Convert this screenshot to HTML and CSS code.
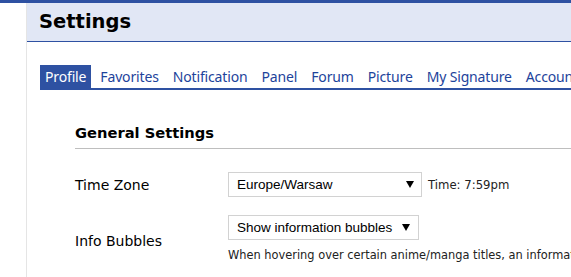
FILE: index.html
```html
<!DOCTYPE html>
<html lang="en">
<head>
  <meta charset="UTF-8">
  <title>Settings</title>
  <link rel="stylesheet" href="styles.css">
</head>
<body>
  <div class="page">
    <div class="page-header">
      <h1>Settings</h1>
    </div>

    <div class="content">
      <!-- tabs -->
      <div class="tabs">
        <a class="tab active">Profile</a>
        <a class="tab">Favorites</a>
        <a class="tab">Notification</a>
        <a class="tab">Panel</a>
        <a class="tab">Forum</a>
        <a class="tab">Picture</a>
        <a class="tab">My Signature</a>
        <a class="tab">Account</a>
      </div>

      <div class="section">
        <h2>General Settings</h2>

        <div class="rows">
          <div class="label">Time Zone</div>
          <div class="value inline">
            <div class="select tz">
              <span>Europe/Warsaw</span>
              <svg width="8" height="7" viewBox="0 0 8 7"><polygon points="0,0 8,0 4,7" fill="#000"/></svg>
            </div>
            <span class="note">Time: 7:59pm</span>
          </div>

          <div class="label bubbles">Info Bubbles</div>
          <div class="value">
            <div class="select bub">
              <span>Show information bubbles</span>
              <svg width="8" height="7" viewBox="0 0 8 7"><polygon points="0,0 8,0 4,7" fill="#000"/></svg>
            </div>
            <p class="desc">When hovering over certain anime/manga titles, an information bubble will appear.</p>
          </div>
        </div>
      </div>
    </div>
  </div>
</body>
</html>
```

FILE: styles.css
```css
html, body {
  overflow: hidden;
}

body {
  margin: 0;
  background-color: #fff;
  border-top: 3px solid #2e51a2;
  font-family: "DejaVu Sans", Verdana, sans-serif;
  color: #000;
}

.page {
  margin-left: 26px;
  width: 900px;
  min-height: 300px;
  border-left: 1px solid #e5e5e5;
}

.page-header {
  background-color: #e1e7f5;
  height: 38px;
  border-bottom: 1px solid #2e51a2;
  padding-left: 12px;
  display: flex;
  align-items: center;
}

h1 {
  margin: 0;
  font-size: 19.5px;
  font-weight: bold;
  line-height: 24px;
  color: #000;
}

.content {
  padding-left: 13px;
}

.tabs {
  margin-top: 23px;
  display: flex;
  gap: 4px;
  border-bottom: 2px solid #2e51a2;
  white-space: nowrap;
}

.tab {
  font-family: "Noto Sans", "Liberation Sans", sans-serif;
  font-size: 14px;
  letter-spacing: -0.15px;
  height: 23px;
  line-height: 23px;
  padding: 0 5px;
  color: #1d439b;
  text-decoration: none;
}

.tab.active {
  background-color: #2e51a2;
  color: #fff;
}

.section {
  padding-left: 35px;
}

h2 {
  margin: 34px 0 0;
  padding-bottom: 7px;
  font-size: 14.7px;
  line-height: 17px;
  font-weight: bold;
  border-bottom: 1px solid #bebebe;
}

.rows {
  margin-top: 23px;
  display: grid;
  grid-template-columns: 153px auto;
  row-gap: 18px;
}

.label {
  font-size: 14px;
  align-self: center;
}

.label.bubbles {
  padding-top: 3px;
}

.value.inline {
  display: flex;
  align-items: center;
  gap: 6px;
}

.select {
  box-sizing: border-box;
  height: 25px;
  border: 1px solid #d2d2d2;
  background-color: #fff;
  display: flex;
  align-items: center;
  justify-content: space-between;
  padding: 0 7px 0 8px;
  font-family: "Liberation Sans", Arial, sans-serif;
  font-size: 13.5px;
  white-space: nowrap;
}

.select.tz {
  width: 194px;
}

.select.bub {
  width: 191px;
  padding-right: 8px;
}

.note {
  font-size: 11.7px;
  color: #222;
}

.desc {
  margin: 7px 0 0;
  font-size: 11.4px;
  line-height: 16px;
  color: #222;
  white-space: nowrap;
}
```
